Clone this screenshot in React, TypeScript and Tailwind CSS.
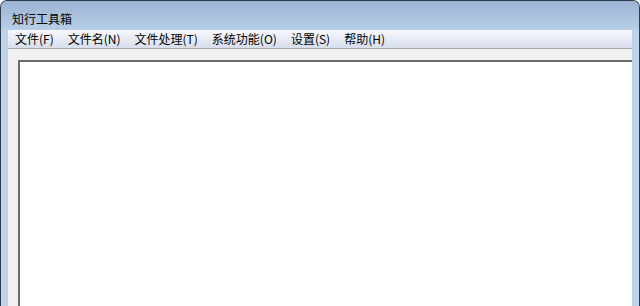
const menus = ['文件(F)', '文件名(N)', '文件处理(T)', '系统功能(O)', '设置(S)', '帮助(H)']

export default function App() {
  return (
    <div
      className="flex h-[306px] w-[640px] flex-col overflow-hidden rounded-t-[7px] border border-b-0 border-[#2f3b4a] bg-[#bcd3ea] text-[12px] text-black"
      style={{ fontFamily: '"Microsoft YaHei", "Noto Sans CJK SC", sans-serif' }}
    >
      {/* title bar */}
      <div className="h-[29px] shrink-0 bg-gradient-to-b from-[#9cb4d2] to-[#b8cfe8] pl-[11px] pt-[10px] leading-[16px]">
        知行工具箱
      </div>

      {/* client area */}
      <div className="mx-[7px] flex flex-1 flex-col bg-[#f0f0f0]">
        <div className="flex h-[19px] shrink-0 items-center border-b border-[#a3aab6] bg-gradient-to-b from-[#f7f8fc] to-[#d8ddec]">
          {menus.map((m) => (
            <span key={m} className="px-[7px] leading-[16px]">
              {m}
            </span>
          ))}
        </div>
        <div className="flex flex-1 flex-col pl-[10px] pt-[11px]">
          <div className="flex-1 border-l-2 border-t-2 border-[#6b6b6b] bg-white" />
        </div>
      </div>
    </div>
  )
}
